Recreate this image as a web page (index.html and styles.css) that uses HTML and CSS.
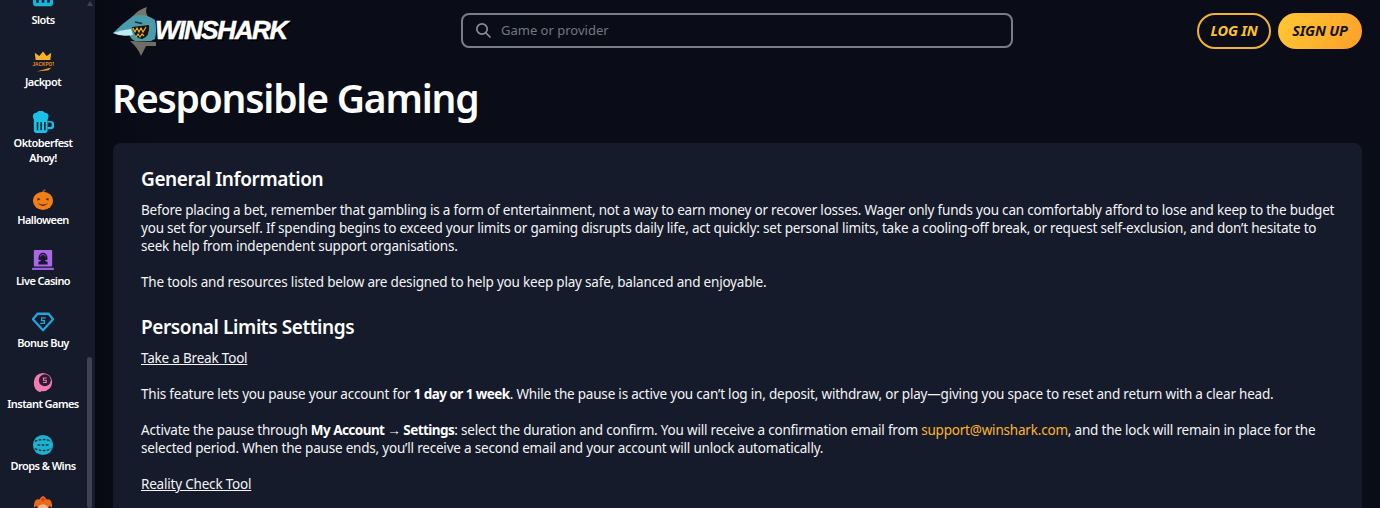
FILE: index.html
```html
<!DOCTYPE html>
<html lang="en">
<head>
<meta charset="utf-8">
<title>Responsible Gaming - WinShark</title>
<link rel="stylesheet" href="styles.css">
</head>
<body>
<div class="app">
  <aside class="sidebar">
    <nav class="nav">
      <a class="nav-item"><svg class="ico" viewBox="0 0 24 24"><path d="M1 0h22v16q0 4-4 4H5q-4 0-4-4z" fill="#19b5d8"/><path d="M6 9v7M12 9v7M18 9v7" stroke="#10263a" stroke-width="3"/></svg><span>Slots</span></a>
      <a class="nav-item"><svg class="ico" viewBox="0 0 24 24"><path d="M3 3l5 3.500 4-5 4 5 5-3.500-1 8H4z" fill="#f7b02a"/><text class="jack" x="0.500" y="17">JACKPOT</text><path d="M5 23.500l16-4.500-3 3z" fill="#f5a51e"/></svg><span>Jackpot</span></a>
      <a class="nav-item"><svg class="ico" viewBox="0 0 24 24"><path d="M2 7h15v14q0 3-3 3H5q-3 0-3-3z" fill="#19c3e6"/><path d="M17 11h3q4 0 4 3v3q0 3-4 3h-3v-2.500h2q2.500 0 2.500-1.500v-2q0-1.500-2.500-1.500h-2z" fill="#19c3e6"/><path d="M1 6a4 4 0 0 1 4-4a5.500 5.500 0 0 1 9 0a4 4 0 0 1 4 4a4 4 0 0 1-4 4H5a4 4 0 0 1-4-4z" fill="#19c3e6"/><path d="M6 12v9M10 12v9M14 12v9" stroke="#10263a" stroke-width="1.800"/></svg><span>Oktoberfest Ahoy!</span></a>
      <a class="nav-item"><svg class="ico" viewBox="0 0 24 24"><path d="M11 5q0-3 3-4l1 2q-2 0-2 2z" fill="#8a5a20"/><ellipse cx="12" cy="14" rx="11" ry="10" fill="#f07f17"/><path d="M6 11l3.500 1-3.500 2zM18 11l-3.500 1 3.500 2zM6 16q6 4 12 0q-6 7-12 0z" fill="#4a1f08"/></svg><span>Halloween</span></a>
      <a class="nav-item"><svg class="ico" viewBox="0 0 24 24"><rect x="2" y="1" width="20" height="18" rx="1" fill="#a968e8"/><path d="M7 17v-3l3-1a3.500 3.500 0 1 1 4 0l3 1v3z" fill="#1c1630"/><path d="M8 12v-3a4 4 0 0 1 8 0v3" fill="none" stroke="#1c1630" stroke-width="1.600"/><rect x="0" y="20.500" width="24" height="2.500" rx="1" fill="#9a5ddc"/></svg><span>Live Casino</span></a>
      <a class="nav-item"><svg class="ico" viewBox="0 0 24 24"><path d="M6 3h12l5 6-11 12L1 9z" fill="none" stroke="#1fa5e0" stroke-width="2.500" stroke-linejoin="round"/><path d="M15 7.500h-4.500v3h3v3H9" fill="none" stroke="#1fa5e0" stroke-width="1.500"/></svg><span>Bonus Buy</span></a>
      <a class="nav-item"><svg class="ico" viewBox="0 0 24 24"><circle cx="12" cy="11" r="10" fill="#f47bb0"/><path d="M2 12q0 8 7 10l2-2z" fill="#f47bb0"/><circle cx="14" cy="9" r="6.500" fill="#2a1e2e"/><path d="M16 6.500h-3.500v2.500h3v2.500H12" fill="none" stroke="#f47bb0" stroke-width="1.200"/></svg><span>Instant Games</span></a>
      <a class="nav-item"><svg class="ico" viewBox="0 0 24 24"><circle cx="12" cy="12" r="11" fill="#19b5d0"/><path d="M3 8q9-4 18 0M3 16q9 4 18 0M6 12h12" fill="none" stroke="#12303f" stroke-width="1.500" stroke-dasharray="3 1.500"/></svg><span>Drops &amp; Wins</span></a>
      <a class="nav-item"><svg class="ico" viewBox="0 0 24 24"><path d="M2 14Q2 3 8 5q2-4 4-4t4 4q6-2 6 9l-3-2-2 3H7l-2-3z" fill="#ea6a1c"/><circle cx="12" cy="5" r="2" fill="#e8352a"/><circle cx="12" cy="16" r="6" fill="#f0b48a"/></svg></a>
    </nav>
    <div class="scroll-arrow"></div>
    <div class="scroll-thumb"></div>
  </aside>
  <div class="main">
    <header class="topbar">
      <a class="logo">
        <svg class="shark" viewBox="0 0 44 50"><path d="M19 11 Q26 3 34 1 Q31 7 37 13z" fill="#77756b"/><path d="M17 35 L43 36 L43 40 L33 40 L28 50 Q25 42 17 35z" fill="#6f6d64"/><path d="M0 27 Q10 17 20 10 Q32 7 42 14 Q44 24 42 33 L38 35 L22 35 Q18 33 16 29 Q6 30 0 27z" fill="#4b9cab"/><path d="M0 27 Q8 24 18 23 L20 29 Q8 31 0 27z" fill="#bfeaf0"/><path d="M19 21 L36 19 Q37 31 29 33 Q22 33 19 21z" fill="#15110c"/><path d="M20 22l2 4 2-4 2 4 2-4 2 4 3-5M23 31l2-3 2 3 2-3 2 2" fill="none" stroke="#f2b21c" stroke-width="1.200"/><path d="M22 16l7 1.500" stroke="#12303a" stroke-width="1.500"/></svg>
        <span class="logo-text">WINSHARK</span>
      </a>
      <label class="search">
        <svg class="search-ico" viewBox="0 0 16 16"><circle cx="7" cy="7" r="5.200" fill="none" stroke="#8b8d96" stroke-width="1.700"/><path d="M11 11l4 4" stroke="#8b8d96" stroke-width="1.700" stroke-linecap="round"/></svg>
        <span class="search-text">Game or provider</span>
      </label>
      <div class="auth">
        <a class="btn btn-login">LOG IN</a>
        <a class="btn btn-signup">SIGN UP</a>
      </div>
    </header>
    <h1 class="title">Responsible Gaming</h1>
    <section class="card">
      <h2>General Information</h2>
      <p>Before placing a bet, remember that gambling is a form of entertainment, not a way to earn money or recover losses. Wager only funds you can comfortably afford to lose and keep to the budget you set for yourself. If spending begins to exceed your limits or gaming disrupts daily life, act quickly: set personal limits, take a cooling-off break, or request self-exclusion, and don’t hesitate to seek help from independent support organisations.</p>
      <p>The tools and resources listed below are designed to help you keep play safe, balanced and enjoyable.</p>
      <h2>Personal Limits Settings</h2>
      <p><a class="ul">Take a Break Tool</a></p>
      <p>This feature lets you pause your account for <b>1 day or 1 week</b>. While the pause is active you can’t log in, deposit, withdraw, or play—giving you space to reset and return with a clear head.</p>
      <p>Activate the pause through <b>My Account → Settings</b>: select the duration and confirm. You will receive a confirmation email from <a class="mail">support@winshark.com</a>, and the lock will remain in place for the selected period. When the pause ends, you’ll receive a second email and your account will unlock automatically.</p>
      <p><a class="ul">Reality Check Tool</a></p>
    </section>
  </div>
</div>
</body>
</html>
```
FILE: styles.css
```css
* { box-sizing: border-box; }
html, body { margin: 0; height: 100%; overflow: hidden; }
body { background: #0a0d18; color: #fff; font-family: "Noto Sans", "Liberation Sans", sans-serif; }
.app { display: flex; height: 508px; overflow: hidden; }

.sidebar { position: relative; flex: 0 0 95px; width: 95px; background: #161b2b; overflow: hidden; }
.nav { display: flex; flex-direction: column; margin-top: -12px; padding-right: 9px; }
.nav-item { display: flex; flex-direction: column; align-items: center; height: 61.500px; flex: none; font-size: 11px; line-height: 15px; letter-spacing: -0.55px; font-weight: 600; text-align: center; }
.nav-item:nth-child(3) { height: 76.500px; }
.nav-item span { margin-top: 2px; width: 76px; }
.ico { width: 22px; height: 22px; flex: none; }
.jack { font-family: "Liberation Sans", sans-serif; font-size: 5.200px; letter-spacing: 0; font-weight: 700; fill: #f08a1a; }
.scroll-arrow { position: absolute; left: 87px; top: 1px; border-left: 3px solid transparent; border-right: 3px solid transparent; border-bottom: 5px solid #3c4252; }
.scroll-thumb { position: absolute; left: 87px; top: 357px; width: 5px; height: 151px; border-radius: 3px; background: #3c4252; }

.main { flex: 1; min-width: 0; padding: 0 18px; background: linear-gradient(90deg, #070a13 0, #0a0d18 60px); }
.topbar { display: flex; align-items: center; height: 62px; padding-bottom: 1px; }
.logo { display: flex; align-items: center; width: 348px; flex: none; }
.shark { width: 44px; height: 50px; flex: none; }
.logo-text { margin-left: -2px; font-family: "Liberation Sans", sans-serif; font-size: 26px; font-weight: 700; font-style: italic; letter-spacing: -1.4px; -webkit-text-stroke: 0.5px #fff; text-shadow: 2px 2px 0 #000; }
.search { display: flex; align-items: center; width: 552px; height: 35px; padding: 0 12px 2px; border: 2px solid #7b7d86; border-radius: 8px; flex: none; }
.search-ico { width: 16px; height: 16px; flex: none; }
.search-text { margin-left: 10px; font-size: 13px; color: #74767f; }
.auth { display: flex; gap: 7px; margin-left: auto; }
.btn { display: flex; align-items: center; justify-content: center; height: 36px; padding-bottom: 2px; border-radius: 18px; font-size: 14.500px; letter-spacing: -0.2px; font-weight: 700; font-style: italic; }
.btn-login { width: 74px; border: 2px solid #f2b430; color: #fcc32b; }
.btn-signup { width: 84px; background: linear-gradient(120deg, #ffc933, #fd9f2a); color: #15131a; }

.title { margin: 0 0 0 -1px; height: 81px; padding-top: 11px; font-size: 39px; line-height: 50px; letter-spacing: -1.2px; font-weight: 600; }
.card { height: 400px; padding: 22px 20px 22px 28px; background: #161b2b; border-radius: 8px; }
.card h2 { margin: 0 0 8px; font-size: 19px; line-height: 28px; letter-spacing: -0.4px; font-weight: 600; }
.card p { margin: 0 0 18px; font-size: 13.500px; line-height: 18px; letter-spacing: -0.2px; color: #f3f4f6; }
.card p + h2 { padding-top: 4px; height: 32px; }
.card b { font-weight: 700; letter-spacing: -0.55px; color: #fff; }
.ul { text-decoration: underline; }
.mail { color: #fdb42b; }
```
